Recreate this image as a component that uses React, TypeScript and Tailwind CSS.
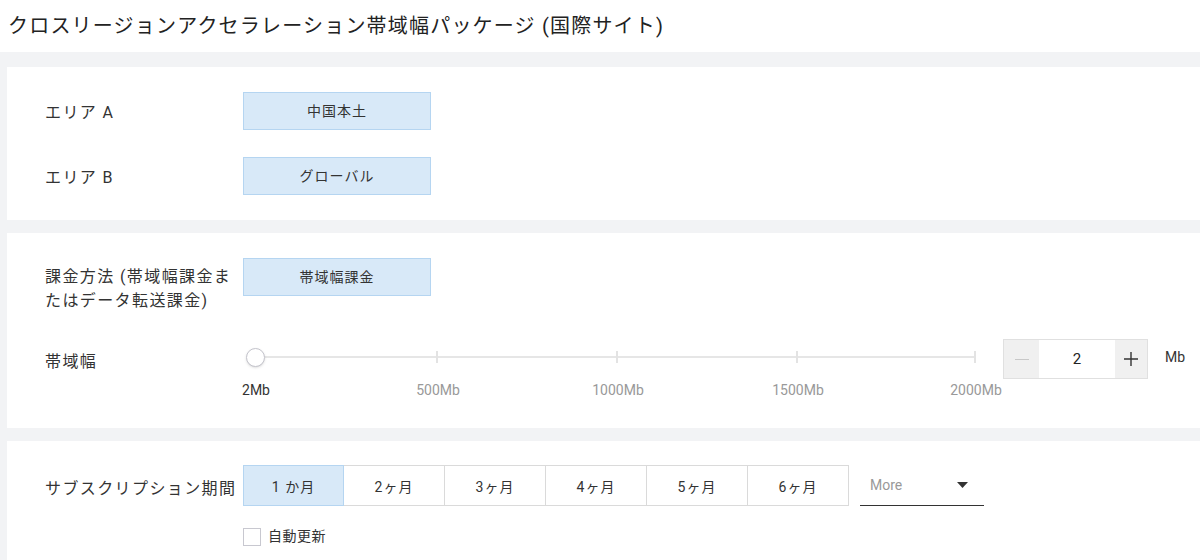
import React from 'react';

const font = { fontFamily: '"Roboto", "Noto Sans CJK JP", sans-serif' };

const ChoiceButton: React.FC<{ label: string }> = ({ label }) => (
  <div className="w-[188px] h-[38px] shrink-0 flex items-center justify-center bg-[#d8e9f8] border border-[#b5d5f1] text-[14px] tracking-[1px] text-[#333]">
    {label}
  </div>
);

const Label: React.FC<{ children: React.ReactNode; className?: string }> = ({ children, className }) => (
  <div className={`w-[198px] shrink-0 text-[16px] tracking-[1.4px] leading-[24px] text-[#333] ${className ?? ''}`}>{children}</div>
);

const ticks = [0, 182, 362, 542, 720];
const tickLabels = ['2Mb', '500Mb', '1000Mb', '1500Mb', '2000Mb'];

const Slider: React.FC = () => (
  <div className="relative w-[744px] h-[62px] shrink-0">
    <div className="absolute left-[12px] top-[17px] w-[720px] h-[2px] bg-[#e6e6e6]" />
    {ticks.slice(1).map((t) => (
      <div key={t} className="absolute top-[12px] w-[2px] h-[12px] bg-[#e3e3e3]" style={{ left: 11 + t }} />
    ))}
    <div className="absolute left-[3px] top-[9px] w-[19px] h-[19px] rounded-full bg-white border border-[#c4c4cc] shadow-sm" />
    {tickLabels.map((l, i) => (
      <div
        key={l}
        className={`absolute top-[41px] w-[80px] -ml-[40px] text-center text-[14px] ${i === 0 ? 'text-[#333]' : 'text-[#999]'}`}
        style={{ left: 13 + ticks[i] }}
      >
        {l}
      </div>
    ))}
  </div>
);

const NumberInput: React.FC = () => (
  <div className="flex h-[40px] w-[145px] shrink-0 border border-[#e0e0e0] ml-[16px]">
    <div className="w-[35px] bg-[#f0f0f0] flex items-center justify-center">
      <div className="w-[14px] h-[1px] bg-[#c8c8c8]" />
    </div>
    <div className="flex-1 bg-white flex items-center justify-center text-[15px] text-[#222]">2</div>
    <div className="w-[32px] bg-[#f0f0f0] flex items-center justify-center">
      <svg width="16" height="16" viewBox="0 0 16 16">
        <path d="M8 1v14M1 8h14" stroke="#333" strokeWidth="1.4" />
      </svg>
    </div>
  </div>
);

const periods = ['1 か月', '2ヶ月', '3ヶ月', '4ヶ月', '5ヶ月', '6ヶ月'];

const App: React.FC = () => {
  return (
    <div className="w-[1200px] h-[560px] overflow-hidden bg-[#f2f3f5]" style={font}>
      <div className="h-[52px] bg-white flex items-center px-[8px] text-[20px] text-[#222] tracking-[1.2px]">
        クロスリージョンアクセラレーション帯域幅パッケージ (国際サイト)
      </div>

      <div className="pl-[7px] pt-[15px] flex flex-col gap-[13px]">
        <div className="bg-white px-[38px] pt-[25px] pb-[25px] flex flex-col gap-[27px]">
          <div className="flex items-center">
            <Label className="pt-[4px]">エリア A</Label>
            <ChoiceButton label="中国本土" />
          </div>
          <div className="flex items-center">
            <Label className="pt-[4px]">エリア B</Label>
            <ChoiceButton label="グローバル" />
          </div>
        </div>

        <div className="bg-white px-[38px] pt-[25px] pb-[27px]">
          <div className="flex items-start">
            <Label className="pt-[7px] pr-[10px]">課金方法 (帯域幅課金またはデータ転送課金)</Label>
            <ChoiceButton label="帯域幅課金" />
          </div>
          <div className="flex items-start mt-[26px]">
            <Label className="pt-[11px]">帯域幅</Label>
            <Slider />
            <NumberInput />
            <div className="ml-[17px] pt-[8px] text-[14px] text-[#333]">Mb</div>
          </div>
        </div>

        <div className="bg-white px-[38px] pt-[24px] pb-[30px]">
          <div className="flex items-center">
            <Label className="pt-[6px]">サブスクリプション期間</Label>
            <div className="flex shrink-0">
              {periods.map((p, i) => (
                <div
                  key={p}
                  className={`w-[101px] h-[41px] flex items-center justify-center pt-[4px] text-[14px] tracking-[1px] text-[#333] border ${
                    i === 0 ? 'bg-[#d8e9f8] border-[#b5d5f1]' : 'bg-white border-[#dadada] border-l-0'
                  }`}
                >
                  {p}
                </div>
              ))}
            </div>
            <div className="ml-[11px] w-[124px] h-[41px] shrink-0 flex items-center justify-between pl-[10px] pr-[16px] border-b-[1.5px] border-[#333]">
              <span className="text-[14px] text-[#999]">More</span>
              <svg width="11" height="6" viewBox="0 0 11 6">
                <path d="M0 0h11L5.5 6z" fill="#333" />
              </svg>
            </div>
          </div>
          <div className="flex items-center ml-[198px] mt-[20px]">
            <div className="w-[18px] h-[18px] border border-[#c8c8d0] bg-white" />
            <span className="ml-[7px] text-[14px] tracking-[0.5px] text-[#333]">自動更新</span>
          </div>
        </div>
      </div>
    </div>
  );
};

export default App;
